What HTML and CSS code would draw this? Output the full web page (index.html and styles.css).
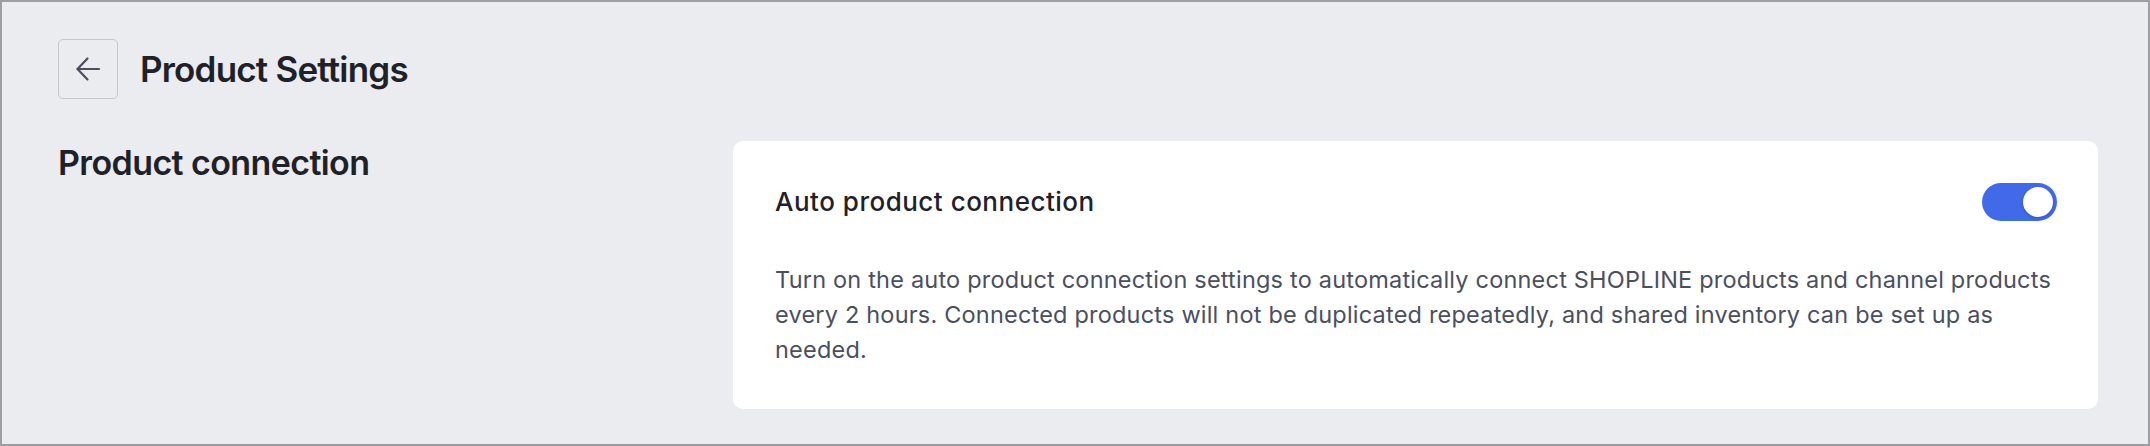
FILE: index.html
```html
<!DOCTYPE html>
<html lang="en">
<head>
  <meta charset="UTF-8">
  <meta name="viewport" content="width=device-width, initial-scale=1.0">
  <title>Product Settings</title>
  <link rel="stylesheet" href="styles.css">
</head>
<body>
  <div class="page">
    <div class="header">
      <button class="back" type="button">
        <svg width="26" height="26" viewBox="0 0 26 26" fill="none" stroke="#4b4f5c" stroke-width="2.2" stroke-linecap="round" stroke-linejoin="round">
          <path d="M24 13H2.5"/>
          <path d="M12.5 2.5L2.5 13l10 10.5"/>
        </svg>
      </button>
      <h1>Product Settings</h1>
    </div>

    <div class="section">
      <h2>Product connection</h2>
      <div class="card">
        <div class="card-head">
          <span class="card-title">Auto product connection</span>
          <span class="switch"><span class="knob"></span></span>
        </div>
        <p class="desc">Turn on the auto product connection settings to automatically connect SHOPLINE products and channel products every 2 hours. Connected products will not be duplicated repeatedly, and shared inventory can be set up as needed.</p>
      </div>
    </div>
  </div>
</body>
</html>
```

FILE: styles.css
```css
  html, body {
    margin: 0;
    padding: 0;
  }
  body {
    font-family: Inter, "Noto Sans", sans-serif;
    color: #1f2129;
  }
  .page {
    box-sizing: border-box;
    width: 2150px;
    height: 446px;
    border: 2px solid #9c9ea4;
    background: #ebecf0;
    padding: 37px 50px 0 56px;
  }
  .header {
    display: flex;
    align-items: center;
    gap: 22px;
  }
  .back {
    box-sizing: border-box;
    width: 60px;
    height: 60px;
    border: 1.5px solid #c2c7d2;
    border-radius: 5px;
    background: transparent;
    display: flex;
    align-items: center;
    justify-content: center;
    padding: 0;
    cursor: pointer;
  }
  h1 {
    margin: 0;
    font-size: 35px;
    font-weight: 600;
    line-height: 44px;
    letter-spacing: -0.8px;
  }
  .section {
    display: grid;
    grid-template-columns: 675px 1fr;
    margin-top: 42px;
  }
  h2 {
    margin: 0;
    font-size: 34px;
    font-weight: 600;
    line-height: 44px;
    letter-spacing: -0.6px;
  }
  .card {
    background: #fff;
    border-radius: 10px;
    padding: 43px 41px 42px 42px;
  }
  .card-head {
    display: flex;
    align-items: center;
    justify-content: space-between;
    height: 36px;
  }
  .card-title {
    font-size: 26px;
    font-weight: 450;
    line-height: 36px;
    letter-spacing: 0.5px;
  }
  .switch {
    position: relative;
    width: 75px;
    height: 38px;
    border-radius: 19px;
    background: #4169e8;
  }
  .knob {
    position: absolute;
    top: 4px;
    right: 4px;
    width: 30px;
    height: 30px;
    border-radius: 50%;
    background: #fff;
    box-shadow: 0 1px 3px rgba(0, 0, 0, 0.2);
  }
  .desc {
    margin: 42px 0 0 0;
    font-size: 23.5px;
    line-height: 35px;
    letter-spacing: 0.2px;
    color: #4a4f5e;
  }
```
